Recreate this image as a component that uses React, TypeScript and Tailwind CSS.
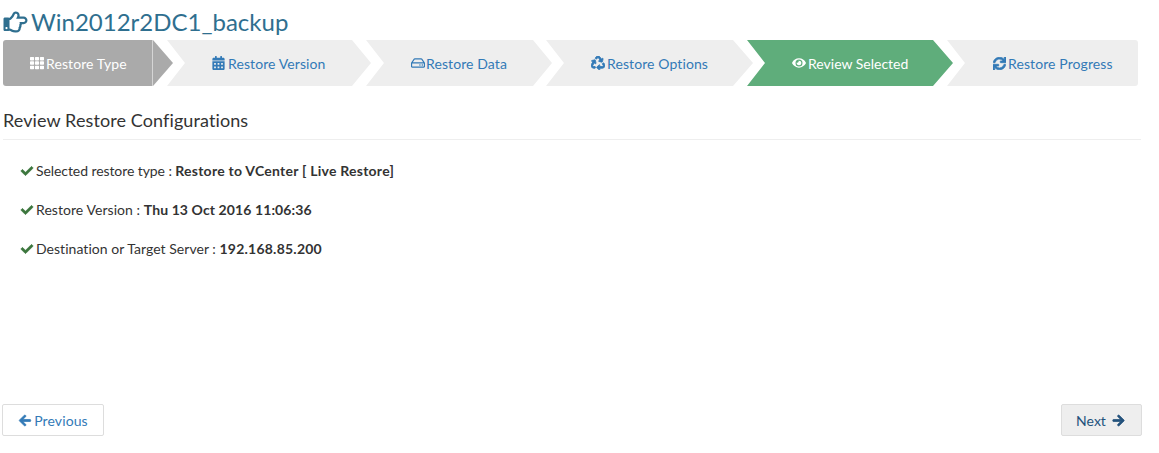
import { FaArrowLeft, FaArrowRight, FaCalendarAlt, FaCheck, FaEye, FaRecycle, FaRegHandPointRight, FaRegHdd, FaSync, FaTh } from "react-icons/fa";

const checks = [
    { label: "Selected restore type :", labelTrack: "tracking-[-0.08px]", value: "Restore to VCenter [ Live Restore]", track: "tracking-[0.24px]" },
    { label: "Restore Version :", labelTrack: "tracking-[0.06px]", value: "Thu 13 Oct 2016 11:06:36", track: "tracking-[0.1px]" },
    { label: "Destination or Target Server :", labelTrack: "tracking-[0.04px]", value: "192.168.85.200", track: "tracking-[0.22px]" },
];

export default function App() {
    return (
        <div className="w-[1159px] h-[453px] bg-white overflow-hidden text-[14px] text-[#333] font-['Lato','Open_Sans',sans-serif]">
            <h1 className="h-[40px] pl-[3px] pt-[4px] flex items-center gap-[3px] text-[24px] leading-[34px] text-[#2f6f8f]">
                <FaRegHandPointRight className="w-[25px] h-[24px]" />
                <span>Win2012r2DC1_backup</span>
            </h1>

            <div className="flex h-[46px] ml-[3px] w-[1135px] tracking-[0.1px]">
                <div className="w-[170px] h-full bg-[#aaaaaa] rounded-l-[3px] text-white flex items-center pl-[27px] gap-[2px] [clip-path:polygon(0_0,150px_0,100%_50%,150px_100%,0_100%)] relative">
                    <FaTh className="w-[14px] h-[14px]" />
                    <span>Restore Type</span>
                    <div className="absolute left-[149px] top-0 bottom-0 w-px bg-[#d5d5d5]" />
                </div>
                <div className="w-[204px] -ml-[6px] h-full bg-[#eeeeee] text-[#337ab7] flex items-center pl-[45px] gap-[3px] [clip-path:polygon(0_0,185px_0,100%_50%,185px_100%,0_100%,18px_50%)]">
                    <FaCalendarAlt className="w-[13px] h-[14px]" />
                    <span>Restore Version</span>
                </div>
                <div className="w-[186px] -ml-[5px] h-full bg-[#eeeeee] text-[#337ab7] flex items-center pl-[45px] gap-[1px] [clip-path:polygon(0_0,167px_0,100%_50%,167px_100%,0_100%,18px_50%)]">
                    <FaRegHdd className="w-[14px] h-[14px]" />
                    <span>Restore Data</span>
                </div>
                <div className="w-[207px] -ml-[6px] h-full bg-[#eeeeee] text-[#337ab7] flex items-center pl-[45px] gap-[2px] [clip-path:polygon(0_0,187px_0,100%_50%,187px_100%,0_100%,18px_50%)]">
                    <FaRecycle className="w-[14px] h-[14px]" stroke="currentColor" strokeWidth={30} />
                    <span>Restore Options</span>
                </div>
                <div className="w-[206px] -ml-[6px] h-full bg-[#5fad7b] text-white flex items-center pl-[45px] gap-[2px] tracking-normal [clip-path:polygon(0_0,186px_0,100%_50%,186px_100%,0_100%,18px_50%)]">
                    <FaEye className="w-[14px] h-[14px]" />
                    <span>Review Selected</span>
                </div>
                <div className="w-[191px] -ml-[6px] h-full bg-[#eeeeee] rounded-r-[3px] text-[#337ab7] flex items-center pl-[46px] gap-[2px] [clip-path:polygon(0_0,100%_0,100%_100%,0_100%,18px_50%)]">
                    <FaSync className="w-[13px] h-[13px]" stroke="currentColor" strokeWidth={30} />
                    <span>Restore Progress</span>
                </div>
            </div>

            <h2 className="ml-[3px] w-[1138px] h-[54px] pt-[21px] border-b border-[#eeeeee] text-[18px] leading-[26px] text-[#333] tracking-[0.1px]">
                Review Restore Configurations
            </h2>

            <ul className="mt-[21px] ml-[20px] flex flex-col gap-[19px]">
                {checks.map((c) => (
                    <li key={c.label} className="h-[20px] flex items-center gap-[2px] leading-[20px]">
                        <FaCheck className="w-[14px] h-[12px] text-[#3c763d]" stroke="currentColor" strokeWidth={25} />
                        <span className={c.labelTrack}>{c.label} <b className={"font-bold " + c.track}>{c.value}</b></span>
                    </li>
                ))}
            </ul>

            <div className="mt-[145px] ml-[2px] w-[1140px] flex justify-between">
                <button className="w-[102px] h-[32px] flex items-center justify-center gap-[2px] bg-white border border-[#dddddd] rounded-[2px] text-[#337ab7] tracking-[0.1px]">
                    <FaArrowLeft className="w-[14px] h-[13px]" stroke="currentColor" strokeWidth={30} />
                    Previous
                </button>
                <button className="w-[81px] h-[32px] flex items-center justify-center gap-[6px] pr-[2px] bg-[#eeeeee] border border-[#dddddd] rounded-[2px] text-[#23527c]">
                    Next
                    <FaArrowRight className="w-[13px] h-[13px]" stroke="currentColor" strokeWidth={30} />
                </button>
            </div>
        </div>
    );
}
